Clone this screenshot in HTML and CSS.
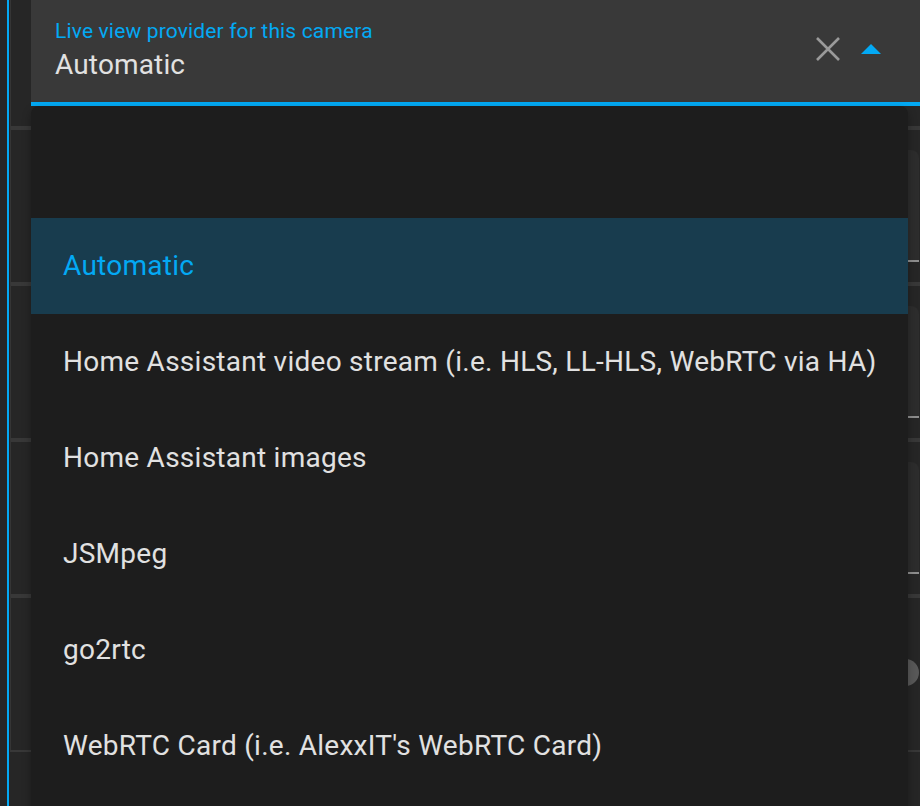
FILE: index.html
```html
<!DOCTYPE html>
<html lang="en">
<head>
    <meta charset="UTF-8">
    <meta name="viewport" content="width=device-width, initial-scale=1.0">
    <title>Live view provider</title>
    <link rel="stylesheet" href="styles.css">
</head>
<body>

<div class="page">
    <div class="accent"></div>

    <!-- Form rows behind the open menu -->
    <div class="panel">
        <div class="row row-first">
            <div class="field field-focused">
                <div class="field-text">
                    <span class="field-label">Live view provider for this camera</span>
                    <span class="field-value">Automatic</span>
                </div>
                <button class="icon-btn clear-btn" aria-label="Clear">
                    <svg width="26" height="26" viewBox="0 0 26 26">
                        <path d="M2 2 L24 24 M24 2 L2 24" stroke="#9a9a9a" stroke-width="2.6" fill="none"/>
                    </svg>
                </button>
                <button class="icon-btn arrow-btn" aria-label="Close menu">
                    <svg width="20" height="10" viewBox="0 0 20 10">
                        <path d="M0 10 L10 0 L20 10 Z" fill="#03a9f4"/>
                    </svg>
                </button>
            </div>
        </div>
        <div class="row"><div class="field"></div></div>
        <div class="row"><div class="field"></div></div>
        <div class="row"><div class="field"></div></div>
        <div class="row row-toggle"><span class="knob"></span></div>
        <div class="row row-last"></div>
    </div>

    <!-- Dropdown -->
    <div class="menu">
        <ul class="list">
            <li class="item item-empty"></li>
            <li class="item selected">Automatic</li>
            <li class="item">Home Assistant video stream (i.e. HLS, LL-HLS, WebRTC via HA)</li>
            <li class="item">Home Assistant images</li>
            <li class="item">JSMpeg</li>
            <li class="item">go2rtc</li>
            <li class="item">WebRTC Card (i.e. AlexxIT's WebRTC Card)</li>
        </ul>
    </div>
</div>

</body>
</html>
```

FILE: styles.css
```css
body {
    margin: 0;
    background-color: #262626;
    font-family: Roboto, "Noto Sans", sans-serif;
    color: #e1e1e1;
}
.page {
    position: relative;
    display: flex;
    height: 806px;
    padding-left: 7px;
    overflow: hidden;
}
.accent {
    width: 2px;
    background-color: #03a9f4;
    flex-shrink: 0;
}
.panel {
    flex: 1;
    margin-left: 1px;
    display: flex;
    flex-direction: column;
}
.row {
    border-left: 1px solid #353535;
    border-top: 4px solid #383838;
    padding: 20px 1px 20px 20px;
}
.row-first {
    border-top: none;
    padding-top: 0;
}
.row-toggle {
    height: 156px;
    padding-top: 0;
    padding-bottom: 0;
    display: flex;
    align-items: center;
    justify-content: flex-end;
    box-sizing: border-box;
}
.row-last {
    border-left: none;
    border-top: 2px solid #383838;
    flex: 1;
}
.field {
    height: 110px;
    background-color: #2d2d2d;
    border-radius: 8px 8px 0 0;
    border-bottom: 2px solid #8e8e8e;
}
.field-focused {
    height: 102px;
    margin-right: -1px;
    background-color: #393939;
    border-radius: 0;
    border-bottom: 4px solid #03a9f4;
    display: flex;
    align-items: center;
    padding-left: 24px;
}
.field-text {
    flex: 1;
    display: flex;
    flex-direction: column;
    padding-bottom: 2px;
    letter-spacing: 0.009375em;
}
.field-label {
    font-size: 21px;
    line-height: 24px;
    color: #03a9f4;
}
.field-value {
    font-size: 28px;
    line-height: 32px;
    margin-top: 6px;
    color: #e1e1e1;
}
.icon-btn {
    background: none;
    border: none;
    padding: 0;
    display: flex;
    align-items: center;
    justify-content: center;
    cursor: pointer;
}
.clear-btn {
    width: 26px;
    height: 26px;
    margin-right: 20px;
    margin-bottom: 4px;
}
.arrow-btn {
    width: 20px;
    height: 10px;
    margin-right: 39px;
    margin-bottom: 5px;
}
.knob {
    width: 27px;
    height: 27px;
    border-radius: 50%;
    background-color: #595959;
    margin-top: -4px;
}
.menu {
    position: absolute;
    left: 31px;
    top: 106px;
    width: 877px;
    bottom: -20px;
    background-color: #1d1d1d;
    border-radius: 8px;
    box-shadow: 0 4px 10px rgba(0, 0, 0, 0.3);
}
.list {
    list-style: none;
    margin: 0;
    padding: 16px 0;
}
.item {
    height: 96px;
    line-height: 96px;
    padding: 0 32px;
    font-size: 28px;
    letter-spacing: 0.009375em;
    color: #e1e1e1;
    white-space: nowrap;
}
.item.selected {
    background-color: #183c4e;
    color: #03a9f4;
}
```
